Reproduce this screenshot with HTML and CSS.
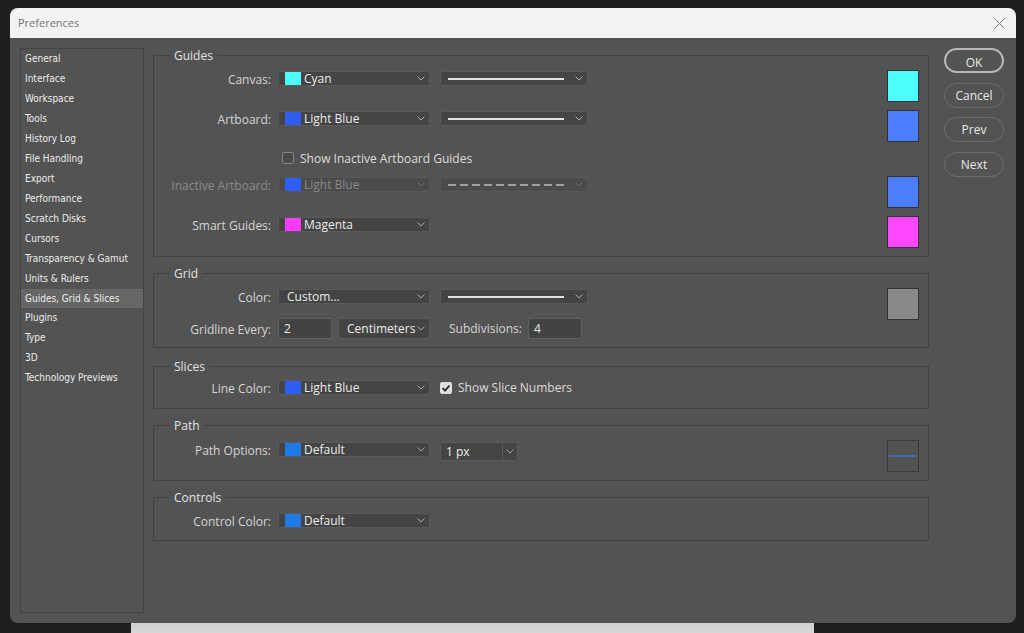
FILE: index.html
```html
<!DOCTYPE html>
<html>
<head>
<meta charset="utf-8">
<title>Preferences</title>
<link rel="stylesheet" href="styles.css">
</head>
<body>
<div class="window">
  <div class="titlebar">
    <span class="title">Preferences</span>
    <svg class="close" width="11" height="11" viewBox="0 0 11 11"><path d="M0.5 0.5L10.5 10.5M10.5 0.5L0.5 10.5" stroke="#7a7a7a" stroke-width="1" fill="none"/></svg>
  </div>
  <div class="content">
    <ul class="nav">
      <li>General</li>
      <li>Interface</li>
      <li>Workspace</li>
      <li>Tools</li>
      <li>History Log</li>
      <li>File Handling</li>
      <li>Export</li>
      <li>Performance</li>
      <li>Scratch Disks</li>
      <li>Cursors</li>
      <li>Transparency &amp; Gamut</li>
      <li>Units &amp; Rulers</li>
      <li class="active">Guides, Grid &amp; Slices</li>
      <li>Plugins</li>
      <li>Type</li>
      <li>3D</li>
      <li>Technology Previews</li>
    </ul>

    <div class="panel">
      <section class="group g-guides">
        <div class="group-title">Guides</div>
        <div class="group-body">
          <div class="fields">
            <div class="row">
              <span class="lbl">Canvas:</span>
              <div class="select"><span class="chip c-cyan"></span><span class="val">Cyan</span><svg class="chev" width="8" height="5" viewBox="0 0 8 5"><path d="M0.5 0.5L4 4L7.5 0.5" fill="none" stroke="#a8a8a8"/></svg></div>
              <div class="select line"><span class="stroke"></span><svg class="chev" width="8" height="5" viewBox="0 0 8 5"><path d="M0.5 0.5L4 4L7.5 0.5" fill="none" stroke="#a8a8a8"/></svg></div>
            </div>
            <div class="row r-artboard">
              <span class="lbl">Artboard:</span>
              <div class="select"><span class="chip c-blue"></span><span class="val">Light Blue</span><svg class="chev" width="8" height="5" viewBox="0 0 8 5"><path d="M0.5 0.5L4 4L7.5 0.5" fill="none" stroke="#a8a8a8"/></svg></div>
              <div class="select line"><span class="stroke"></span><svg class="chev" width="8" height="5" viewBox="0 0 8 5"><path d="M0.5 0.5L4 4L7.5 0.5" fill="none" stroke="#a8a8a8"/></svg></div>
            </div>
            <div class="row check-row">
              <span class="checkbox"></span>
              <span class="cb-text">Show Inactive Artboard Guides</span>
            </div>
            <div class="row r-inactive disabled">
              <span class="lbl">Inactive Artboard:</span>
              <div class="select"><span class="chip c-blue"></span><span class="val">Light Blue</span><svg class="chev" width="8" height="5" viewBox="0 0 8 5"><path d="M0.5 0.5L4 4L7.5 0.5" fill="none" stroke="#6c6c6c"/></svg></div>
              <div class="select line"><span class="stroke dashed"></span><svg class="chev" width="8" height="5" viewBox="0 0 8 5"><path d="M0.5 0.5L4 4L7.5 0.5" fill="none" stroke="#6c6c6c"/></svg></div>
            </div>
            <div class="row r-smart">
              <span class="lbl">Smart Guides:</span>
              <div class="select"><span class="chip c-magenta"></span><span class="val">Magenta</span><svg class="chev" width="8" height="5" viewBox="0 0 8 5"><path d="M0.5 0.5L4 4L7.5 0.5" fill="none" stroke="#a8a8a8"/></svg></div>
            </div>
          </div>
          <div class="swatches">
            <div class="swatch s-cyan"></div>
            <div class="swatch s-blue"></div>
            <div class="swatch s-blue s-gap"></div>
            <div class="swatch s-magenta"></div>
          </div>
        </div>
      </section>

      <section class="group g-grid">
        <div class="group-title">Grid</div>
        <div class="group-body">
          <div class="fields">
            <div class="row">
              <span class="lbl">Color:</span>
              <div class="select nochip"><span class="val">Custom...</span><svg class="chev" width="8" height="5" viewBox="0 0 8 5"><path d="M0.5 0.5L4 4L7.5 0.5" fill="none" stroke="#a8a8a8"/></svg></div>
              <div class="select line"><span class="stroke"></span><svg class="chev" width="8" height="5" viewBox="0 0 8 5"><path d="M0.5 0.5L4 4L7.5 0.5" fill="none" stroke="#a8a8a8"/></svg></div>
            </div>
            <div class="row r-gridline">
              <span class="lbl">Gridline Every:</span>
              <div class="input">2</div>
              <div class="select units"><span class="val">Centimeters</span><svg class="chev" width="8" height="5" viewBox="0 0 8 5"><path d="M0.5 0.5L4 4L7.5 0.5" fill="none" stroke="#a8a8a8"/></svg></div>
              <span class="lbl-inline">Subdivisions:</span>
              <div class="input sub">4</div>
            </div>
          </div>
          <div class="swatches">
            <div class="swatch s-gray"></div>
          </div>
        </div>
      </section>

      <section class="group g-slices">
        <div class="group-title">Slices</div>
        <div class="group-body">
          <div class="fields">
            <div class="row">
              <span class="lbl">Line Color:</span>
              <div class="select"><span class="chip c-blue"></span><span class="val">Light Blue</span><svg class="chev" width="8" height="5" viewBox="0 0 8 5"><path d="M0.5 0.5L4 4L7.5 0.5" fill="none" stroke="#a8a8a8"/></svg></div>
              <span class="checkbox checked"><svg width="12" height="12" viewBox="0 0 12 12"><path d="M2.6 6.2L5 8.6L9.4 3.6" fill="none" stroke="#2a2a2a" stroke-width="1.8"/></svg></span>
              <span class="cb-text">Show Slice Numbers</span>
            </div>
          </div>
        </div>
      </section>

      <section class="group g-path">
        <div class="group-title">Path</div>
        <div class="group-body">
          <div class="fields">
            <div class="row top">
              <span class="lbl">Path Options:</span>
              <div class="select"><span class="chip c-default"></span><span class="val">Default</span><svg class="chev" width="8" height="5" viewBox="0 0 8 5"><path d="M0.5 0.5L4 4L7.5 0.5" fill="none" stroke="#a8a8a8"/></svg></div>
              <div class="pxbox"><span class="val">1 px</span><span class="pxbtn"><svg width="8" height="5" viewBox="0 0 8 5"><path d="M0.5 0.5L4 4L7.5 0.5" fill="none" stroke="#a8a8a8"/></svg></span></div>
            </div>
          </div>
          <div class="swatches">
            <div class="swatch s-path"><span class="path-line"></span></div>
          </div>
        </div>
      </section>

      <section class="group g-controls">
        <div class="group-title">Controls</div>
        <div class="group-body">
          <div class="fields">
            <div class="row">
              <span class="lbl">Control Color:</span>
              <div class="select"><span class="chip c-default"></span><span class="val">Default</span><svg class="chev" width="8" height="5" viewBox="0 0 8 5"><path d="M0.5 0.5L4 4L7.5 0.5" fill="none" stroke="#a8a8a8"/></svg></div>
            </div>
          </div>
        </div>
      </section>
    </div>

    <div class="buttons">
      <button class="btn primary">OK</button>
      <button class="btn">Cancel</button>
      <button class="btn b-prev">Prev</button>
      <button class="btn">Next</button>
    </div>
  </div>
</div>
<div class="behind"></div>
</body>
</html>
```

FILE: styles.css
```css
* { box-sizing: border-box; }
html, body { margin: 0; padding: 0; }
body {
  background: #1f1f1f;
  width: 1024px;
  height: 633px;
  overflow: hidden;
  font-family: "Open Sans", "Liberation Sans", sans-serif;
  font-size: 12px;
  color: #d6d6d6;
}

.window {
  margin: 8px 0 0 10px;
  width: 1006px;
  height: 615px;
  border-radius: 8px;
  overflow: hidden;
  background: #535353;
  display: flex;
  flex-direction: column;
}

.titlebar {
  height: 30px;
  flex: none;
  background: #f3f3f3;
  display: flex;
  align-items: center;
  justify-content: space-between;
  padding: 0 11px 0 8px;
}
.title { font-size: 11px; line-height: 16px; color: #747474; }
.close { display: block; }

.content {
  flex: 1;
  display: flex;
  padding: 10px 12px 10px 10px;
}

/* sidebar */
.nav {
  list-style: none;
  margin: 0;
  padding: 1px 0 0;
  width: 124px;
  flex: none;
  border: 1px solid #434343;
  font-family: "DejaVu Sans Condensed", "DejaVu Sans", sans-serif;
  font-size: 10px;
  color: #ececec;
}
.nav li {
  height: 18px;
  line-height: 18px;
  padding-left: 4px;
  margin-bottom: 2px;
  white-space: nowrap;
}
.nav li.active { background: #666666; margin-top: -1px; height: 19px; line-height: 20px; margin-bottom: 1px; }

/* main panel */
.panel {
  width: 776px;
  flex: none;
  margin: 7px 15px 0 9px;
}
.group { border: 1px solid #414141; }
.group + .group { margin-top: 16px; }
.group.g-slices { margin-top: 18px; }
.group-title {
  margin: -9px 0 0 16px;
  padding: 0 4px;
  width: fit-content;
  height: 16px;
  line-height: 18px;
  background: #535353;
  color: #e2e2e2;
}
.group-body { display: flex; align-items: flex-start; }
.fields { flex: 1; }
.swatches { width: 32px; margin-right: 9px; flex: none; display: flex; flex-direction: column; }

.g-guides { padding-bottom: 8px; }
.g-guides .fields { padding-top: 8px; }
.g-guides .swatches { padding-top: 7px; }
.g-grid { padding-bottom: 8px; }
.g-grid .fields { padding-top: 8px; }
.g-grid .swatches { padding-top: 7px; }
.g-slices { padding-bottom: 13px; }
.g-slices .fields { padding-top: 6px; }
.g-path { padding-bottom: 8px; }
.g-path .fields { padding-top: 9px; }
.g-path .swatches { padding-top: 7px; }
.g-controls { padding-bottom: 12px; }
.g-controls .fields { padding-top: 8px; }

.row { display: flex; align-items: center; height: 15px; }
.row.top { align-items: flex-start; height: 19px; }
.r-artboard { margin-top: 25px; }
.check-row { margin-top: 25px; height: 14px; padding-left: 128px; }
.r-inactive { margin-top: 12px; }
.r-smart { margin-top: 25px; }
.r-gridline { margin-top: 14px; height: 21px; }

.lbl {
  width: 117px;
  margin-right: 7px;
  text-align: right;
  line-height: 15px;
  padding-top: 1px;
  white-space: nowrap;
  color: #d4d4d4;
  flex: none;
}
.disabled .lbl { color: #8a8a8a; }

.select {
  width: 152px;
  height: 15px;
  flex: none;
  border: 1px solid #5a5a5a;
  border-radius: 3px;
  background: #444444;
  display: flex;
  align-items: center;
  padding: 0 4px 0 6px;
  color: #ececec;
  line-height: 15px;
  white-space: nowrap;
}
.select .val { flex: 1; margin-top: -1px; }
.select .chev { flex: none; display: block; }
.select.nochip { padding-left: 8px; }
.select.line { width: 148px; margin-left: 10px; padding-left: 7px; }
.disabled .select { background: #4b4b4b; border-color: #575757; color: #8a8a8a; }

.chip { width: 16px; height: 13px; flex: none; margin-right: 3px; }
.c-cyan { background: #4dfcfc; }
.c-blue { background: #2e5ef6; }
.c-magenta { background: #fa3cfa; }
.c-default { background: #1f7ae6; }

.stroke { width: 116px; height: 2px; background: #e2e2e2; margin-right: auto; flex: none; }
.stroke.dashed { background: repeating-linear-gradient(to right, #a0a0a0 0 8px, transparent 8px 12px); }

.checkbox {
  width: 12px;
  height: 12px;
  flex: none;
  border: 1px solid #858585;
  border-radius: 2px;
  background: #4a4a4a;
  margin-right: 6px;
  display: flex;
}
.checkbox.checked { background: #dedede; border-color: #dedede; margin-left: 10px; }
.checkbox.checked svg { margin: -1px; display: block; }
.cb-text { color: #dcdcdc; line-height: 15px; white-space: nowrap; }

.input {
  width: 54px;
  height: 21px;
  flex: none;
  border: 1px solid #606060;
  background: #434343;
  padding-left: 5px;
  line-height: 19px;
  color: #ececec;
}
.select.units { width: 92px; height: 21px; margin-left: 6px; padding-left: 8px; }
.lbl-inline { margin-left: 19px; margin-right: 6px; color: #d4d4d4; white-space: nowrap; }
.input.sub { height: 21px; }

.pxbox {
  width: 78px;
  height: 19px;
  flex: none;
  margin-left: 10px;
  border: 1px solid #5a5a5a;
  border-radius: 3px;
  background: #444444;
  display: flex;
  align-items: center;
  color: #ececec;
}
.pxbox .val { flex: 1; padding-left: 5px; line-height: 17px; }
.pxbtn {
  width: 15px;
  height: 100%;
  border-left: 1px solid #5a5a5a;
  display: flex;
  align-items: center;
  justify-content: center;
}
.pxbtn svg { display: block; }

.swatch { width: 32px; height: 32px; border: 1px solid #333333; flex: none; }
.swatch + .swatch { margin-top: 8px; }
.swatch.s-gap { margin-top: 34px; }
.s-cyan { background: #4dffff; }
.s-blue { background: #4c7dff; }
.s-magenta { background: #ff48ff; }
.s-gray { background: #898989; }
.s-path { background: transparent; border-color: #3c3c3c; display: flex; align-items: center; justify-content: center; }
.path-line { width: 28px; height: 2px; background: #3d6fab; }

/* buttons */
.buttons { width: 60px; flex: none; display: flex; flex-direction: column; gap: 10px; }
.btn {
  height: 25px;
  flex: none;
  padding: 0;
  border: 1px solid #6e6e6e;
  border-radius: 13px;
  background: transparent;
  color: #e8e8e8;
  font-family: "Open Sans", "Liberation Sans", sans-serif;
  font-size: 12px;
  line-height: 21px;
}
.btn.primary { border: 2px solid #b8b8b8; padding-top: 2px; }
.btn.b-prev { margin-top: -1px; }

.behind {
  margin-left: 131px;
  width: 683px;
  height: 10px;
  background: linear-gradient(#cfcfcf, #d8d8d8);
}
```
